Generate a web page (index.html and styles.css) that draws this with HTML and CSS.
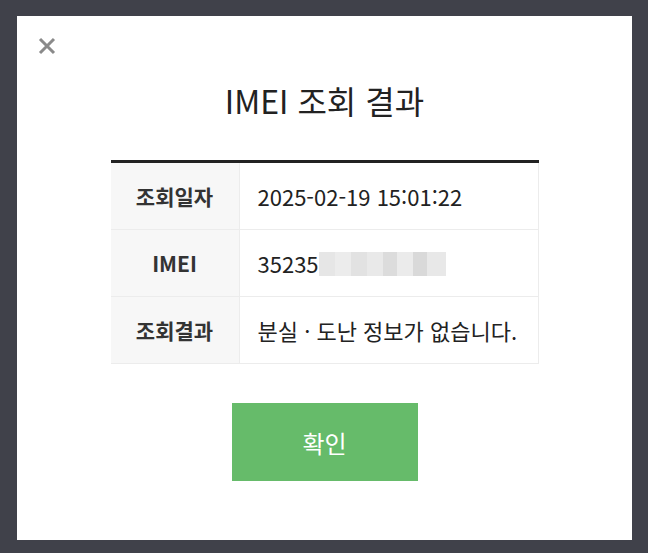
FILE: index.html
```html
<!DOCTYPE html>
<html lang="ko">
<head>
<meta charset="utf-8">
<link rel="stylesheet" href="styles.css">
</head>
<body>
<div class="modal">
  <button class="close" aria-label="닫기">
    <svg width="18" height="18" viewBox="0 0 18 18"><path d="M2 2L16 16M16 2L2 16" stroke="#8a8a8a" stroke-width="3" stroke-linecap="butt"/></svg>
  </button>
  <h1 class="title">IMEI 조회 결과</h1>
  <table class="result">
    <tr>
      <th>조회일자</th>
      <td>2025-02-19 15:01:22</td>
    </tr>
    <tr>
      <th>IMEI</th>
      <td><span class="imei">35235</span><span class="blur"><i class="b1"></i><i class="b2"></i><i class="b3"></i><i class="b4"></i><i class="b5"></i><i class="b6"></i><i class="b7"></i><i class="b8"></i></span></td>
    </tr>
    <tr>
      <th>조회결과</th>
      <td>분실 · 도난 정보가 없습니다.</td>
    </tr>
  </table>
  <div class="actions"><button class="ok">확인</button></div>
</div>
</body>
</html>
```
FILE: styles.css
```css
html, body { margin: 0; padding: 0; }
body {
  background: #40414a;
  width: 648px;
  height: 553px;
  overflow: hidden;
  font-family: "Noto Sans CJK KR", "Noto Sans", sans-serif;
}
.modal {
  position: relative;
  box-sizing: border-box;
  margin: 16px 0 0 17px;
  width: 615px;
  height: 524px;
  background: #fff;
  padding-top: 63px;
}
.close {
  position: absolute;
  left: 21px;
  top: 21px;
  width: 18px;
  height: 18px;
  padding: 0;
  border: 0;
  background: none;
}
.close svg { display: block; }
.title {
  margin: 0;
  font-size: 32px;
  line-height: 42px;
  font-weight: 400;
  color: #222;
  text-align: center;
}
.result {
  margin: 39px auto 0;
  width: 428px;
  border-collapse: collapse;
  border-top: 3px solid #222;
}
.result th, .result td {
  height: 66px;
  padding: 0;
  border-bottom: 1px solid #ececec;
  font-size: 22px;
  line-height: 28px;
  color: #222;
}
.result th {
  width: 128px;
  background: #f7f7f7;
  font-weight: 700;
  font-size: 21px;
  color: #333;
  text-align: center;
  border-right: 1px solid #ececec;
}
.result td {
  padding-left: 18px;
  text-align: left;
  border-right: 1px solid #ececec;
}
.imei { vertical-align: baseline; }
.blur {
  display: inline-flex;
  vertical-align: -3px;
  width: 127px;
  height: 24px;
  background: #ebebeb;
}
.blur i { display: block; height: 24px; }
.b1 { width: 16px; background: #e6e6e6; }
.b2 { width: 16px; background: #ececec; }
.b3 { width: 16px; background: #e2e2e2; }
.b4 { width: 16px; background: #e9e9e9; }
.b5 { width: 14px; background: #dcdcdc; }
.b6 { width: 16px; background: #ebebeb; }
.b7 { width: 14px; background: #d9d9d9; }
.b8 { width: 19px; background: #e8e8e8; }
.actions {
  display: flex;
  justify-content: center;
  margin-top: 39px;
}
.ok {
  width: 186px;
  height: 78px;
  border: 0;
  background: #66bb6a;
  color: #fff;
  font-family: inherit;
  font-size: 24px;
  padding: 0;
}
```
